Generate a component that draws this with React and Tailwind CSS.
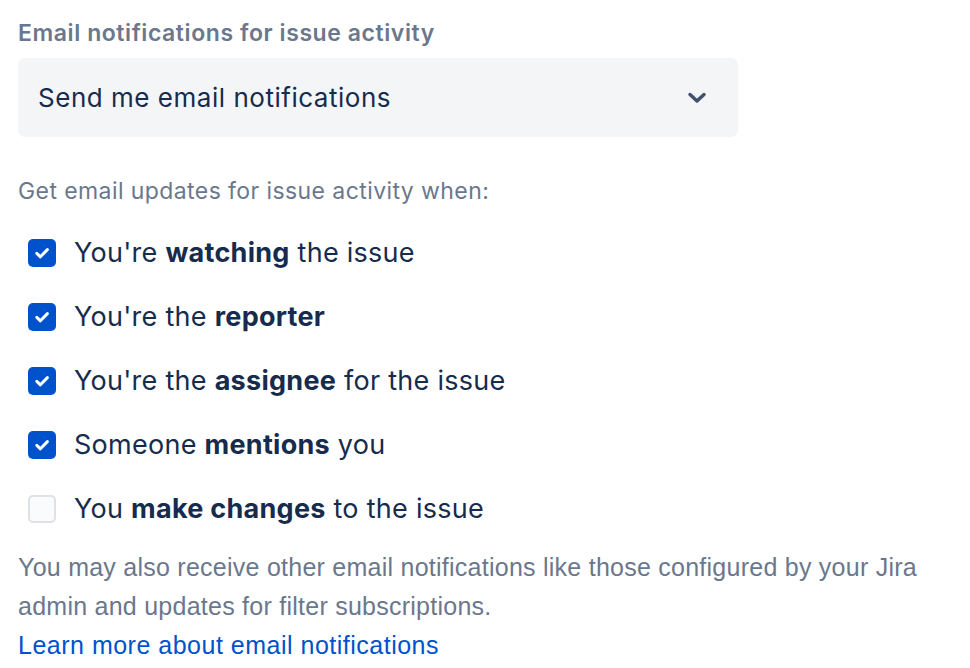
import React, { useState } from 'react';

const options = [
  { id: 'watching', pre: "You're ", bold: 'watching', post: ' the issue', checked: true },
  { id: 'reporter', pre: "You're the ", bold: 'reporter', post: '', checked: true },
  { id: 'assignee', pre: "You're the ", bold: 'assignee', post: ' for the issue', checked: true },
  { id: 'mentions', pre: 'Someone ', bold: 'mentions', post: ' you', checked: true },
  { id: 'changes', pre: 'You ', bold: 'make changes', post: ' to the issue', checked: false },
];

const Checkbox = ({ checked, onChange }) => (
  <button
    onClick={onChange}
    className={
      checked
        ? 'w-[28px] h-[28px] rounded-[5px] bg-[#0052cc] flex items-center justify-center shrink-0'
        : 'w-[28px] h-[28px] rounded-[5px] bg-[#fafbfc] border-2 border-[#dfe1e6] shrink-0'
    }
  >
    {checked && (
      <svg width="20" height="20" viewBox="0 0 20 20" fill="none">
        <path d="M4.8 10.3l3.6 3.5L15.4 6.6" stroke="white" strokeWidth="3" strokeLinecap="round" strokeLinejoin="round" />
      </svg>
    )}
  </button>
);

const App = () => {
  const [checks, setChecks] = useState(options.map(o => o.checked));

  const toggle = (i) => {
    setChecks(checks.map((c, j) => (j === i ? !c : c)));
  };

  return (
    <div className="min-h-screen bg-white pl-[18px] pt-[18px] font-['Inter',sans-serif] text-[#172b4d]">
      <div className="text-[23px] tracking-[0.025em] font-semibold text-[#6b778c] leading-[30px]">
        Email notifications for issue activity
      </div>

      {/* Select */}
      <div className="mt-[10px] w-[720px] h-[79px] rounded-[7px] bg-[#f4f5f7] flex items-center justify-between pl-[20px] pr-[30px]">
        <span className="text-[26px] tracking-[0.02em] text-[#172b4d]">Send me email notifications</span>
        <svg width="22" height="20" viewBox="0 0 22 20">
          <path d="M4 6.5l7 6.5 7-6.5" stroke="#42526e" strokeWidth="3.5" fill="none" strokeLinecap="round" strokeLinejoin="round" />
        </svg>
      </div>

      <div className="mt-[39px] text-[23px] tracking-[0.018em] text-[#6b778c] leading-[30px]">
        Get email updates for issue activity when:
      </div>

      {/* Options */}
      <div className="mt-[29px] flex flex-col gap-[28px] pl-[10px]">
        {options.map((o, i) => (
          <label key={o.id} className="flex items-center gap-[18px] h-[36px] cursor-pointer">
            <Checkbox checked={checks[i]} onChange={() => toggle(i)} />
            <span className="text-[27px] tracking-[0.01em] text-[#172b4d]">
              {o.pre}
              <b className="font-bold">{o.bold}</b>
              {o.post}
            </span>
          </label>
        ))}
      </div>

      <div className="mt-[21px] font-['Liberation_Sans',sans-serif] text-[25px] tracking-[0.01em] leading-[39px]">
        <p className="text-[#6b778c]">
          You may also receive other email notifications like those configured by your Jira
          <br />
          admin and updates for filter subscriptions.
        </p>
        <a href="#" className="block text-[#0052cc] tracking-[0.02em]">
          Learn more about email notifications
        </a>
      </div>
    </div>
  );
};

export default App;
